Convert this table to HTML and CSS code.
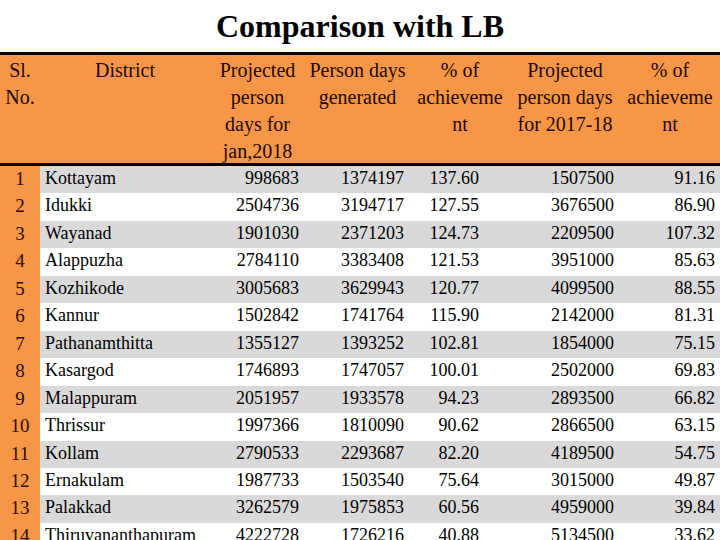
FILE: index.html
```html
<!DOCTYPE html>
<html>
<head>
<meta charset="utf-8">
<link rel="stylesheet" href="styles.css">
</head>
<body>
<h1 class="title">Comparison with LB</h1>
<div class="table">
  <div class="row head">
    <div class="c sl">Sl.<br>No.</div>
    <div class="c">District</div>
    <div class="c">Projected<br>person<br>days for<br>jan,2018</div>
    <div class="c">Person days<br>generated</div>
    <div class="c">% of<br>achieveme<br>nt</div>
    <div class="c">Projected<br>person days<br>for 2017-18</div>
    <div class="c">% of<br>achieveme<br>nt</div>
  </div>
  <div class="body">
    <div class="row"><div class="c sl">1</div><div class="c d">Kottayam</div><div class="c n3">998683</div><div class="c n4">1374197</div><div class="c n5">137.60</div><div class="c n6">1507500</div><div class="c n7">91.16</div></div>
    <div class="row"><div class="c sl">2</div><div class="c d">Idukki</div><div class="c n3">2504736</div><div class="c n4">3194717</div><div class="c n5">127.55</div><div class="c n6">3676500</div><div class="c n7">86.90</div></div>
    <div class="row"><div class="c sl">3</div><div class="c d">Wayanad</div><div class="c n3">1901030</div><div class="c n4">2371203</div><div class="c n5">124.73</div><div class="c n6">2209500</div><div class="c n7">107.32</div></div>
    <div class="row"><div class="c sl">4</div><div class="c d">Alappuzha</div><div class="c n3">2784110</div><div class="c n4">3383408</div><div class="c n5">121.53</div><div class="c n6">3951000</div><div class="c n7">85.63</div></div>
    <div class="row"><div class="c sl">5</div><div class="c d">Kozhikode</div><div class="c n3">3005683</div><div class="c n4">3629943</div><div class="c n5">120.77</div><div class="c n6">4099500</div><div class="c n7">88.55</div></div>
    <div class="row"><div class="c sl">6</div><div class="c d">Kannur</div><div class="c n3">1502842</div><div class="c n4">1741764</div><div class="c n5">115.90</div><div class="c n6">2142000</div><div class="c n7">81.31</div></div>
    <div class="row"><div class="c sl">7</div><div class="c d">Pathanamthitta</div><div class="c n3">1355127</div><div class="c n4">1393252</div><div class="c n5">102.81</div><div class="c n6">1854000</div><div class="c n7">75.15</div></div>
    <div class="row"><div class="c sl">8</div><div class="c d">Kasargod</div><div class="c n3">1746893</div><div class="c n4">1747057</div><div class="c n5">100.01</div><div class="c n6">2502000</div><div class="c n7">69.83</div></div>
    <div class="row"><div class="c sl">9</div><div class="c d">Malappuram</div><div class="c n3">2051957</div><div class="c n4">1933578</div><div class="c n5">94.23</div><div class="c n6">2893500</div><div class="c n7">66.82</div></div>
    <div class="row"><div class="c sl">10</div><div class="c d">Thrissur</div><div class="c n3">1997366</div><div class="c n4">1810090</div><div class="c n5">90.62</div><div class="c n6">2866500</div><div class="c n7">63.15</div></div>
    <div class="row"><div class="c sl">11</div><div class="c d">Kollam</div><div class="c n3">2790533</div><div class="c n4">2293687</div><div class="c n5">82.20</div><div class="c n6">4189500</div><div class="c n7">54.75</div></div>
    <div class="row"><div class="c sl">12</div><div class="c d">Ernakulam</div><div class="c n3">1987733</div><div class="c n4">1503540</div><div class="c n5">75.64</div><div class="c n6">3015000</div><div class="c n7">49.87</div></div>
    <div class="row"><div class="c sl">13</div><div class="c d">Palakkad</div><div class="c n3">3262579</div><div class="c n4">1975853</div><div class="c n5">60.56</div><div class="c n6">4959000</div><div class="c n7">39.84</div></div>
    <div class="row"><div class="c sl">14</div><div class="c d">Thiruvananthapuram</div><div class="c n3">4222728</div><div class="c n4">1726216</div><div class="c n5">40.88</div><div class="c n6">5134500</div><div class="c n7">33.62</div></div>
  </div>
</div>
</body>
</html>
```

FILE: styles.css
```css
html, body {
  margin: 0;
  padding: 0;
  width: 720px;
  height: 540px;
  overflow: hidden;
  background: #ffffff;
  font-family: "Liberation Serif", "Times New Roman", serif;
  color: #000;
}

.title {
  margin: 0;
  height: 52px;
  line-height: 52px;
  font-size: 32px;
  font-weight: bold;
  text-align: center;
}

.table {
  border-top: 3px solid #000;
}

.row {
  display: grid;
  grid-template-columns: 40px 170px 95px 105px 100px 110px 100px;
}

.head {
  background: #f79646;
  height: 108px;
  font-size: 20px;
  line-height: 27px;
  color: #1c0a05;
  border-bottom: 3px solid #000;
}

.head .c {
  text-align: center;
  padding-top: 2px;
}

.body .row {
  height: 27.46px;
  font-size: 18px;
  line-height: 25px;
}

.body .row:nth-child(odd) {
  background: #d9d9d9;
}

.body .row:nth-child(even) {
  background: #ffffff;
}

.body .sl {
  background: #f79646;
  text-align: center;
  font-size: 19px;
  color: #2a0d08;
}

.d {
  padding-left: 5px;
  white-space: nowrap;
}

.n3, .n4, .n5, .n6, .n7 {
  text-align: right;
}

.n3 { padding-right: 6px; }
.n4 { padding-right: 6px; }
.n5 { padding-right: 31px; }
.n6 { padding-right: 6px; }
.n7 { padding-right: 5px; }
```
